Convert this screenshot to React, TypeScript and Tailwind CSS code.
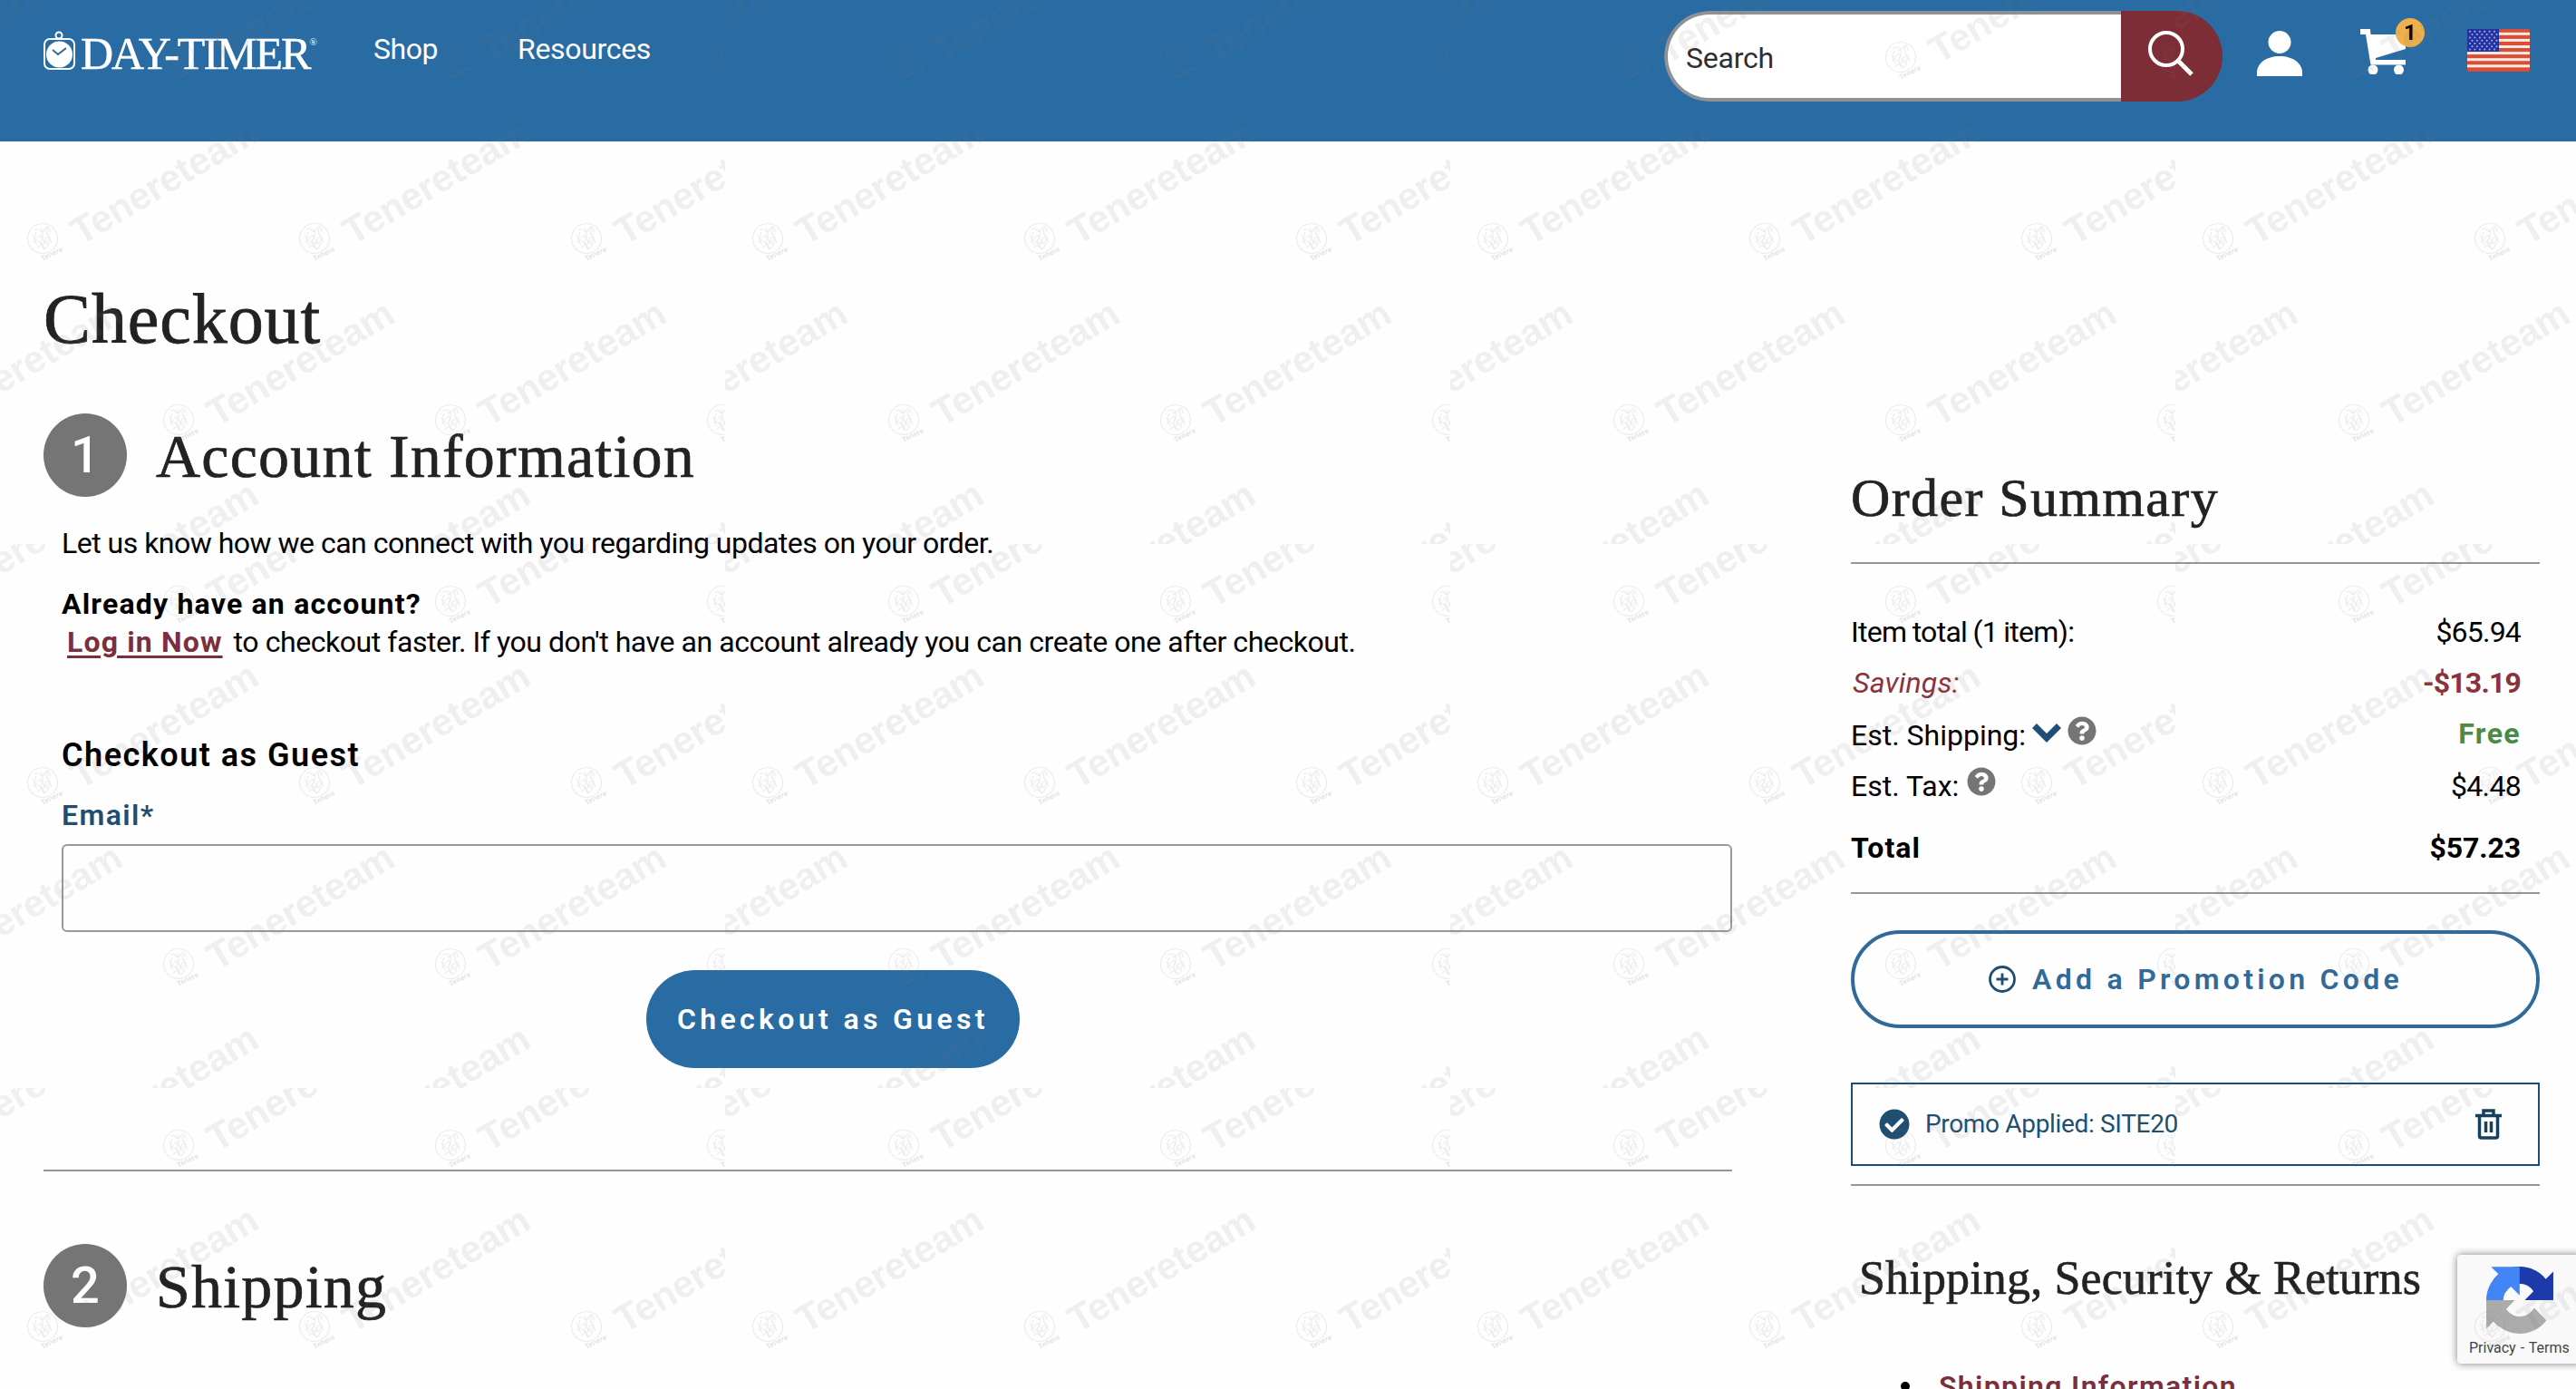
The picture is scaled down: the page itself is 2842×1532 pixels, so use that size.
import type { ReactNode } from "react";
import { FaCheckCircle, FaQuestionCircle } from "react-icons/fa";

// emblem centres inside one 800x600 tile
const MARKS = [
  [-104, 63], [196, 63], [496, 63], [796, 63],
  [46, 263], [346, 263], [646, 263],
  [-104, 463], [196, 463], [496, 463], [796, 463],
  [46, 663], [346, 663], [646, 663],
];

function Watermark() {
  return (
    <svg className="pointer-events-none absolute inset-0 h-full w-full">
      <defs>
        <g id="mark" fill="#777">
          <g fill="none" stroke="#777" strokeOpacity="0.13" strokeWidth="1.2">
            <circle cx="1" r="16.5" />
            <path d="M-8-9q3-4 6 0t6-2 5 4M-10-3q4 5 7 1t5 4 8-3M-9 4q4-4 7 1t6-3 7 3M-5 11q3-6 6-1t7-5M-1-12q4 6 1 11t3 12M6-11q-2 6 3 10M-6-7q-4 7 1 14" />
          </g>
          <text transform="translate(1 25) rotate(-27)" fontFamily="Liberation Sans" fontSize="8" fontWeight="bold" fillOpacity="0.22">Tenere</text>
          <text transform="translate(43 8) rotate(-30.5)" fontFamily="Liberation Sans" fontSize="42" fontWeight="bold" textLength="231" fillOpacity="0.11">Tenereteam</text>
        </g>
        <pattern id="tile" width="800" height="600" patternUnits="userSpaceOnUse">
          {MARKS.map(([x, y]) => (
            <use key={`${x}-${y}`} href="#mark" x={x} y={y} />
          ))}
        </pattern>
      </defs>
      <rect width="100%" height="100%" fill="url(#tile)" />
    </svg>
  );
}

function Flag() {
  return (
    <svg width="69" height="47" viewBox="0 0 69 47">
      <rect width="69" height="47" rx="2" fill="#d84e37" />
      {[0, 1, 2, 3, 4, 5].map((i) => (
        <rect key={i} y={3.8 + i * 7.1} width="69" height="3" fill="#fbe9e2" />
      ))}
      <rect width="35" height="25" fill="#2334a0" />
      {[0, 1, 2, 3, 4, 5, 6].map((r) =>
        [0, 1, 2, 3, 4, 5].map((c) => (
          <circle key={`${r}-${c}`} cx={3 + c * 5.4 + (r % 2) * 2.5} cy={2.8 + r * 3.3} r="1" fill="#a9b2ea" />
        ))
      )}
    </svg>
  );
}

function Header() {
  return (
    <header className="flex h-[156px] items-start bg-[#296ba3] pl-12 pr-[51px] text-[32px] leading-10 text-white">
      <div className="flex w-[364px] pt-[34px]">
        <svg width="36" height="44" viewBox="0 0 36 44" fill="none" stroke="#fff">
          <circle cx="17" cy="5" r="3.5" strokeWidth="2" />
          <rect x="1" y="9" width="33" height="33" rx="6" strokeWidth="2" />
          <circle cx="17.5" cy="26" r="14.5" fill="#fff" stroke="none" />
          <path d="M10 21l6 5 9-7" stroke="#296ba3" strokeWidth="2" />
        </svg>
        <span className="ml-[5px] h-[50px] font-['Liberation_Serif',serif] text-[50px] leading-[50px] tracking-[-2px] [-webkit-text-stroke:0.5px]">DAY-TIMER</span>
        <span className="pt-[6px] font-['Liberation_Serif',serif] text-[11px] leading-[12px]">®</span>
      </div>
      <nav className="flex pt-[34px]">
        <a className="w-[159px] tracking-[-0.46px]">Shop</a>
        <a className="tracking-[-0.32px]">Resources</a>
      </nav>
      <div className="ml-auto flex items-start">
        <div className="mt-3 flex h-[100px] w-[616px] overflow-hidden rounded-full">
          <div className="flex w-[504px] items-center rounded-l-full border-y-4 border-l-4 border-[#8e9296] bg-white pl-[20px] pt-1 tracking-[-0.22px] text-[#2f2f2f]">
            Search
          </div>
          <button className="flex flex-1 justify-start bg-[#7d2d36] pl-[30px] pt-[22px]">
            <svg width="50" height="50" viewBox="0 0 50 50" fill="none" stroke="#fff">
              <circle cx="20" cy="20" r="18" strokeWidth="4" />
              <path d="M33 33l15 15" strokeWidth="5" />
            </svg>
          </button>
        </div>
        <svg className="ml-[38px] mt-[34px]" width="50" height="50" viewBox="0 0 50 50" fill="#fff">
          <circle cx="25" cy="12.5" r="12.5" />
          <path d="M0 50v-4c0-10 10-18 25-18s25 8 25 18v4z" />
        </svg>
        <div className="relative ml-16 mt-8 h-[50px] w-[71px]">
          <svg width="51" height="50" viewBox="0 0 51 50" fill="#fff">
            <path d="M0 0h11l.5 6H50v16L17 32v2h33v5.500H11.500L6 6H0z" />
            <circle cx="14" cy="45" r="5.500" />
            <circle cx="42.500" cy="45" r="5.500" />
          </svg>
          <span className="absolute -top-3 right-0 flex h-8 w-8 items-center justify-center rounded-full bg-[#edb04a] text-[24px] font-bold text-black">1</span>
        </div>
        <div className="ml-[47px] mt-8">
          <Flag />
        </div>
      </div>
    </header>
  );
}

function Step({ n, children }: { n: number; children: ReactNode }) {
  return (
    <div className="flex h-[92px]">
      <div className="flex h-[92px] w-[92px] items-center justify-center rounded-full bg-[#757575] text-[56px] font-medium text-white">{n}</div>
      <h2 className="ml-8 font-['Liberation_Serif',serif] text-[68px] leading-[94px] tracking-[1.2px] text-[#222] [-webkit-text-stroke:0.7px]">{children}</h2>
    </div>
  );
}

function Row({ className = "", label, children }: { className?: string; label: ReactNode; children: ReactNode }) {
  return (
    <div className={`flex h-10 justify-between pr-[21px] ${className}`}>
      <div className="flex whitespace-pre">{label}</div>
      {children}
    </div>
  );
}

function Summary() {
  return (
    <aside className="ml-[131px] w-[760px] pt-[357px]">
      <h2 className="font-['Liberation_Serif',serif] text-[60px] leading-[72px] tracking-[1.37px] text-[#222] [-webkit-text-stroke:0.7px]">Order Summary</h2>
      <hr className="mt-[35px] h-[2px] border-0 bg-[#979797]" />
      <Row className="mt-[55px]" label={<span className="tracking-[-0.7px] [word-spacing:-1px]">Item total (1 item):</span>}>
        <span className="tracking-[-0.8px]">$65.94</span>
      </Row>
      <Row className="mt-4" label={<span className="pl-[2px] italic tracking-[0.2px] text-[#8b323c]">Savings:</span>}>
        <span className="font-bold tracking-[-0.8px] text-[#8b323c]">-$13.19</span>
      </Row>
      <Row
        className="mt-[18px]"
        label={
          <>
            <span>Est. Shipping:</span>
            <svg className="ml-[7px] mt-[7px]" width="32" height="21" viewBox="0 0 32 21">
              <path d="M0 5l5-5 11 11L27 0l5 5-16 16z" fill="#1f4e78" />
            </svg>
            <FaQuestionCircle className="ml-[7px] -mt-px text-[#757575]" size={32} />
          </>
        }
      >
        <span className="-mt-[2px] font-bold tracking-[1.4px] text-[#4b8b47]">Free</span>
      </Row>
      <Row
        className="mt-4"
        label={
          <>
            <span>Est. Tax:</span>
            <FaQuestionCircle className="ml-[9px] -mt-px text-[#757575]" size={32} />
          </>
        }
      >
        <span className="tracking-[-0.68px]">$4.48</span>
      </Row>
      <Row className="mt-7 font-bold" label={<span className="tracking-[1.1px]">Total</span>}>
        <span className="tracking-[-0.1px]">$57.23</span>
      </Row>
      <hr className="mt-[29px] h-[2px] border-0 bg-[#979797]" />
      <button className="mt-10 flex h-[108px] w-full items-center rounded-full border-4 border-[#2f6a9a] pl-[148px] font-semibold text-[#2f6a9a]">
        <svg width="30" height="30" viewBox="0 0 30 30" fill="none" stroke="#1f4e70" strokeWidth="2.800">
          <circle cx="15" cy="15" r="13.500" />
          <path d="M15 8.500v13M8.500 15h13" />
        </svg>
        <span className="ml-[18px] tracking-[4.28px]">Add a Promotion Code</span>
      </button>
      <div className="mt-[60px] flex h-[92px] items-center border-2 border-[#1f4e70] pl-[29px] pr-10 text-[28px] text-[#1f4e70]">
        <FaCheckCircle size={34} />
        <span className="ml-[17px] tracking-[-0.33px]">Promo Applied: SITE20</span>
        <svg className="ml-auto" width="29" height="34" viewBox="0 0 29 34" fill="none" stroke="#17405f" strokeWidth="3.500">
          <path d="M0 7.500h29M9 7V2h11v5M4.500 8v22q0 2 2 2h16q2 0 2-2V8M11.500 14v12M17.500 14v12" />
        </svg>
      </div>
      <hr className="mt-5 h-[2px] border-0 bg-[#979797]" />
      <h3 className="ml-[9px] mt-[70px] font-['Liberation_Serif',serif] text-[52px] leading-[64px] tracking-[0.17px] text-[#222] [-webkit-text-stroke:0.6px]">
        Shipping, Security &amp; Returns
      </h3>
      <div className="mt-[67px] flex pl-[55px] font-semibold text-[#7b2f3c]">
        <span className="mt-[15px] h-[10px] w-[10px] rounded-full bg-black" />
        <a className="ml-8 tracking-[1.34px]">Shipping Information</a>
      </div>
    </aside>
  );
}

function Recaptcha() {
  return (
    <div className="absolute bottom-7 left-[2711px] flex h-[120px] w-[140px] flex-col rounded bg-[#f9f9f9] pl-8 pt-[13px] shadow-[0_0_10px_#808080]">
      <svg width="74" height="74" viewBox="0 0 64 64">
        <path fill="#1c3aa9" d="M64 31.955l-.033-1.370V4.687l-7.160 7.160C50.948 4.674 42.033.093 32.050.093c-10.400 0-19.622 4.960-25.458 12.640l11.736 11.860a15.550 15.550 0 0 1 4.754-5.334c2.050-1.600 4.952-2.906 8.968-2.906.485 0 .860.057 1.135.163 4.976.393 9.288 3.140 11.828 7.124l-8.307 8.307L64 31.953" />
        <path fill="#4285f4" d="M31.862.094l-1.370.033H4.594l7.160 7.160C4.580 13.147 0 22.060 0 32.046c0 10.400 4.960 19.622 12.640 25.458L24.500 45.768a15.550 15.550 0 0 1-5.334-4.754c-1.600-2.050-2.906-4.952-2.906-8.968 0-.485.057-.860.163-1.135.393-4.976 3.140-9.288 7.124-11.828l8.307 8.307L31.860.095" />
        <path fill="#ababab" d="M.001 32.045l.033 1.370v25.898l7.160-7.160c5.860 7.173 14.774 11.754 24.760 11.754 10.400 0 19.622-4.960 25.458-12.640l-11.736-11.860a15.550 15.550 0 0 1-4.754 5.334c-2.050 1.600-4.952 2.906-8.968 2.906-.485 0-.860-.057-1.135-.163-4.976-.393-9.288-3.140-11.828-7.124l8.307-8.307c-10.522.040-22.400.066-27.295-.005" />
      </svg>
      <span className="-ml-[19px] mt-1 whitespace-nowrap text-[16px] leading-6 text-[#444] [word-spacing:1px]">Privacy - Terms</span>
    </div>
  );
}

export default function App() {
  return (
    <div className="relative h-[1532px] w-[2842px] overflow-hidden bg-[#fefefe] font-['Roboto',sans-serif] text-[32px] leading-10 text-black">
      <Header />
      <div className="flex items-start pl-12">
        <main className="w-[1863px] pt-[148px]">
          <h1 className="font-['Liberation_Serif',serif] text-[78px] leading-[96px] tracking-[0.88px] text-[#222] [-webkit-text-stroke:0.8px]">Checkout</h1>
          <section className="mt-[56px]">
            <Step n={1}>Account Information</Step>
            <div className="pl-5">
              <p className="mt-[31px] tracking-[-0.51px]">Let us know how we can connect with you regarding updates on your order.</p>
              <p className="mt-[27px] font-bold tracking-[1.2px]">Already have an account?</p>
              <p className="mt-[2px] flex">
                <a className="ml-[6px] font-bold tracking-[1.15px] text-[#7b2f3c] underline decoration-[3px] underline-offset-4">Log in Now</a>
                <span className="ml-[12px] tracking-[-0.44px]">to checkout faster. If you don't have an account already you can create one after checkout.</span>
              </p>
              <h4 className="mt-[83px] text-[36px] font-semibold leading-[44px] tracking-[1.5px]">Checkout as Guest</h4>
              <label className="mt-6 block font-semibold tracking-[1.4px] text-[#1f4e70]">Email*</label>
              <input className="mt-3 block h-[97px] w-full rounded-md border-2 border-[#999]" />
              <button className="ml-[645px] mt-[42px] flex h-[108px] w-[412px] items-center rounded-full bg-[#296ba3] pl-[34px] font-semibold tracking-[4.35px] text-white">
                Checkout as Guest
              </button>
            </div>
          </section>
          <hr className="mt-[112px] h-[2px] border-0 bg-[#979797]" />
          <section className="mt-20">
            <Step n={2}>Shipping</Step>
          </section>
        </main>
        <Summary />
      </div>
      <Recaptcha />
      <Watermark />
    </div>
  );
}
